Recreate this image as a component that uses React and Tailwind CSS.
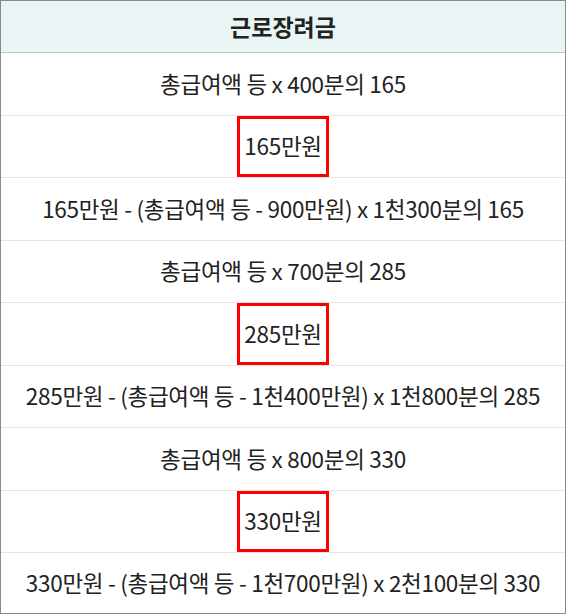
import React from "react";

const rows = [
    { text: "총급여액 등 x 400분의 165" },
    { text: "165만원", boxed: true },
    { text: "165만원 - (총급여액 등 - 900만원) x 1천300분의 165" },
    { text: "총급여액 등 x 700분의 285" },
    { text: "285만원", boxed: true },
    { text: "285만원 - (총급여액 등 - 1천400만원) x 1천800분의 285" },
    { text: "총급여액 등 x 800분의 330" },
    { text: "330만원", boxed: true },
    { text: "330만원 - (총급여액 등 - 1천700만원) x 2천100분의 330" },
];

export default function App() {
    return (
        <div className="w-[566px] h-[614px] bg-white border border-[#8a8a8a] flex flex-col text-[#222] font-['Noto_Sans_CJK_KR','Noto_Sans',sans-serif]">
            <div className="h-[52px] shrink-0 bg-[#e9f5f5] border-b border-[#b7cad2] flex items-center justify-center text-[23px] font-semibold">
                근로장려금
            </div>
            {rows.map((row, i) => (
                <div
                    key={i}
                    className={`flex items-center justify-center text-[22.5px] tracking-[-0.3px] ${i === rows.length - 1 ? "flex-1" : "h-[62.5px] shrink-0 border-b border-[#e4e4e4]"}`}
                >
                    {row.boxed ? (
                        <span className="h-full flex items-center px-[4px] border-[3px] border-[#ff0000]">{row.text}</span>
                    ) : (
                        row.text
                    )}
                </div>
            ))}
        </div>
    );
}
